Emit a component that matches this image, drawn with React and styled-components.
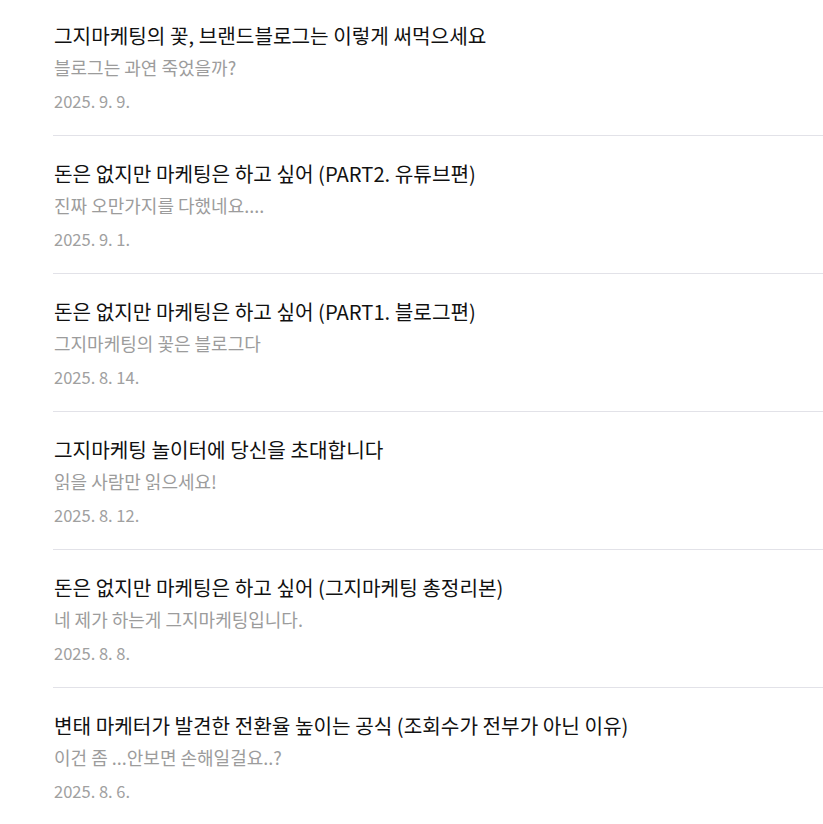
import React from "react";
import styled, { createGlobalStyle } from "styled-components";

const Global = createGlobalStyle`
  html, body { margin: 0; padding: 0; background: #fff; }
  body { font-family: "Noto Sans CJK KR", "Noto Sans", sans-serif; overflow: hidden; }
`;

const List = styled.ul`
  list-style: none;
  margin: -2px 0 0 53px;
  padding: 0;
`;

const Item = styled.li`
  padding: 24px 0 23px 1px;
  border-bottom: 1px solid #e2e2e8;
  &:last-child { border-bottom: none; }
`;

const Title = styled.h2`
  margin: 0;
  font-size: 20.2px;
  line-height: 28px;
  font-weight: 400;
  color: #111;
`;

const Sub = styled.p`
  margin: 5px 0 0;
  font-size: 18px;
  line-height: 24px;
  color: #9c9c9c;
`;

const DateText = styled.p`
  margin: 11px 0 0;
  font-size: 16.5px;
  line-height: 22px;
  font-weight: 400;
  color: #a0a0a0;
`;

const posts = [
  ["그지마케팅의 꽃, 브랜드블로그는 이렇게 써먹으세요", "블로그는 과연 죽었을까?", "2025. 9. 9."],
  ["돈은 없지만 마케팅은 하고 싶어 (PART2. 유튜브편)", "진짜 오만가지를 다했네요....", "2025. 9. 1."],
  ["돈은 없지만 마케팅은 하고 싶어 (PART1. 블로그편)", "그지마케팅의 꽃은 블로그다", "2025. 8. 14."],
  ["그지마케팅 놀이터에 당신을 초대합니다", "읽을 사람만 읽으세요!", "2025. 8. 12."],
  ["돈은 없지만 마케팅은 하고 싶어 (그지마케팅 총정리본)", "네 제가 하는게 그지마케팅입니다.", "2025. 8. 8."],
  ["변태 마케터가 발견한 전환율 높이는 공식 (조회수가 전부가 아닌 이유)", "이건 좀 ...안보면 손해일걸요..?", "2025. 8. 6."],
];

export default function App() {
  return (
    <>
      <Global />
      <List>
        {posts.map(([t, s, d]) => (
          <Item key={t}>
            <Title>{t}</Title>
            <Sub>{s}</Sub>
            <DateText>{d}</DateText>
          </Item>
        ))}
      </List>
    </>
  );
}
